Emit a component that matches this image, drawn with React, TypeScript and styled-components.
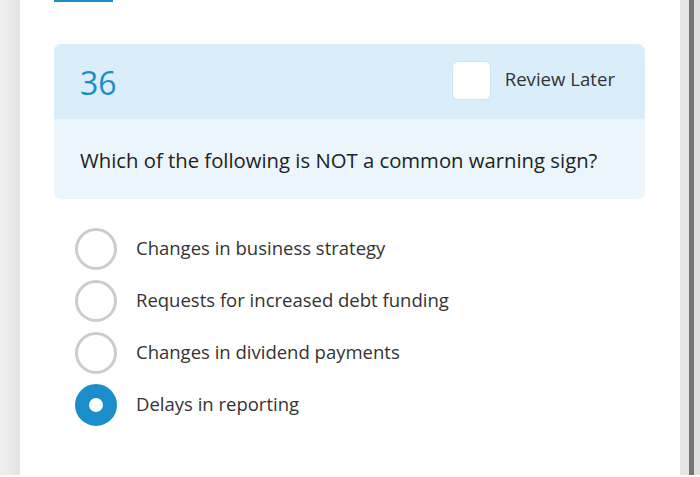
import React, { useState } from 'react';
import styled, { createGlobalStyle } from 'styled-components';

const GlobalStyle = createGlobalStyle`
    html, body {
        margin: 0;
        padding: 0;
        background: #ffffff;
        overflow: hidden;
    }
    body {
        font-family: "Open Sans", "Noto Sans", Arial, sans-serif;
        color: #333333;
    }
`;

const Shell = styled.div`
    display: flex;
    width: 700px;
    height: 477px;
`;

const LeftEdge = styled.div`
    width: 20px;
    height: 475px;
    background: linear-gradient(to right, #f0f0f0, #e4e4e4);
`;

const RightEdge = styled.div`
    display: flex;
    height: 475px;
`;

const EdgeStrip = styled.div<{ $w: number; $color: string }>`
    width: ${p => p.$w}px;
    background: ${p => p.$color};
`;

const Page = styled.main`
    flex: 1;
    display: flex;
    flex-direction: column;
    padding: 0 35px 0 34px;
    background: #ffffff;
`;

const TabMark = styled.div`
    width: 59px;
    height: 2px;
    background: #1b8ec9;
`;

const Card = styled.section`
    margin-top: 42px;
    border-radius: 7px;
    overflow: hidden;
`;

const CardHeader = styled.div`
    height: 75px;
    display: flex;
    align-items: center;
    justify-content: space-between;
    padding: 0 30px 0 26px;
    background: #d9eef8;
`;

const Number = styled.span`
    font-size: 32px;
    color: #1b8ec9;
    margin-top: 1px;
`;

const ReviewToggle = styled.label`
    display: flex;
    align-items: center;
    gap: 14px;
    margin-top: -3px;
    font-size: 18.6px;
    color: #333333;
    cursor: pointer;
`;

const ReviewText = styled.span`
    margin-bottom: 4px;
`;

const Box = styled.span`
    width: 37px;
    height: 37px;
    border-radius: 6px;
    background: #ffffff;
    border: 1px solid #cfe6f2;
`;

const CardBody = styled.div`
    height: 78px;
    display: flex;
    align-items: center;
    padding: 2px 26px 0;
    background: #eaf5fc;
    font-size: 20.3px;
    color: #222222;
`;

const Options = styled.ul`
    list-style: none;
    margin: 24px 0 0;
    padding: 0 0 0 21px;
    display: flex;
    flex-direction: column;
`;

const Option = styled.li`
    height: 52px;
    display: flex;
    align-items: center;
    gap: 19px;
    font-size: 18.5px;
    color: #333333;
    cursor: pointer;
`;

const OptionText = styled.span`
    margin-bottom: 3px;
`;

const Radio = styled.span<{ $on: boolean }>`
    box-sizing: border-box;
    flex: none;
    width: 42px;
    height: 42px;
    border-radius: 50%;
    border: ${p => (p.$on ? '14px solid #1b8ec9' : '3px solid #cccccc')};
    background: #ffffff;
`;

const answers = [
    'Changes in business strategy',
    'Requests for increased debt funding',
    'Changes in dividend payments',
    'Delays in reporting',
];

export default function App() {
    const [picked, setPicked] = useState(3);
    const [review, setReview] = useState(false);

    return (
        <>
            <GlobalStyle />
            <Shell>
                <LeftEdge />
                <Page>
                    <TabMark />
                    <Card>
                        <CardHeader>
                            <Number>36</Number>
                            <ReviewToggle onClick={() => setReview(!review)}>
                                <Box />
                                <ReviewText>Review Later</ReviewText>
                            </ReviewToggle>
                        </CardHeader>
                        <CardBody>Which of the following is NOT a common warning sign?</CardBody>
                    </Card>
                    <Options>
                        {answers.map((a, i) => (
                            <Option key={a} onClick={() => setPicked(i)}>
                                <Radio $on={picked === i} />
                                <OptionText>{a}</OptionText>
                            </Option>
                        ))}
                    </Options>
                </Page>
                <RightEdge>
                    <EdgeStrip $w={9} $color="#e6e6e6" />
                    <EdgeStrip $w={5} $color="#767676" />
                    <EdgeStrip $w={6} $color="#e0e0e0" />
                </RightEdge>
            </Shell>
        </>
    );
}
